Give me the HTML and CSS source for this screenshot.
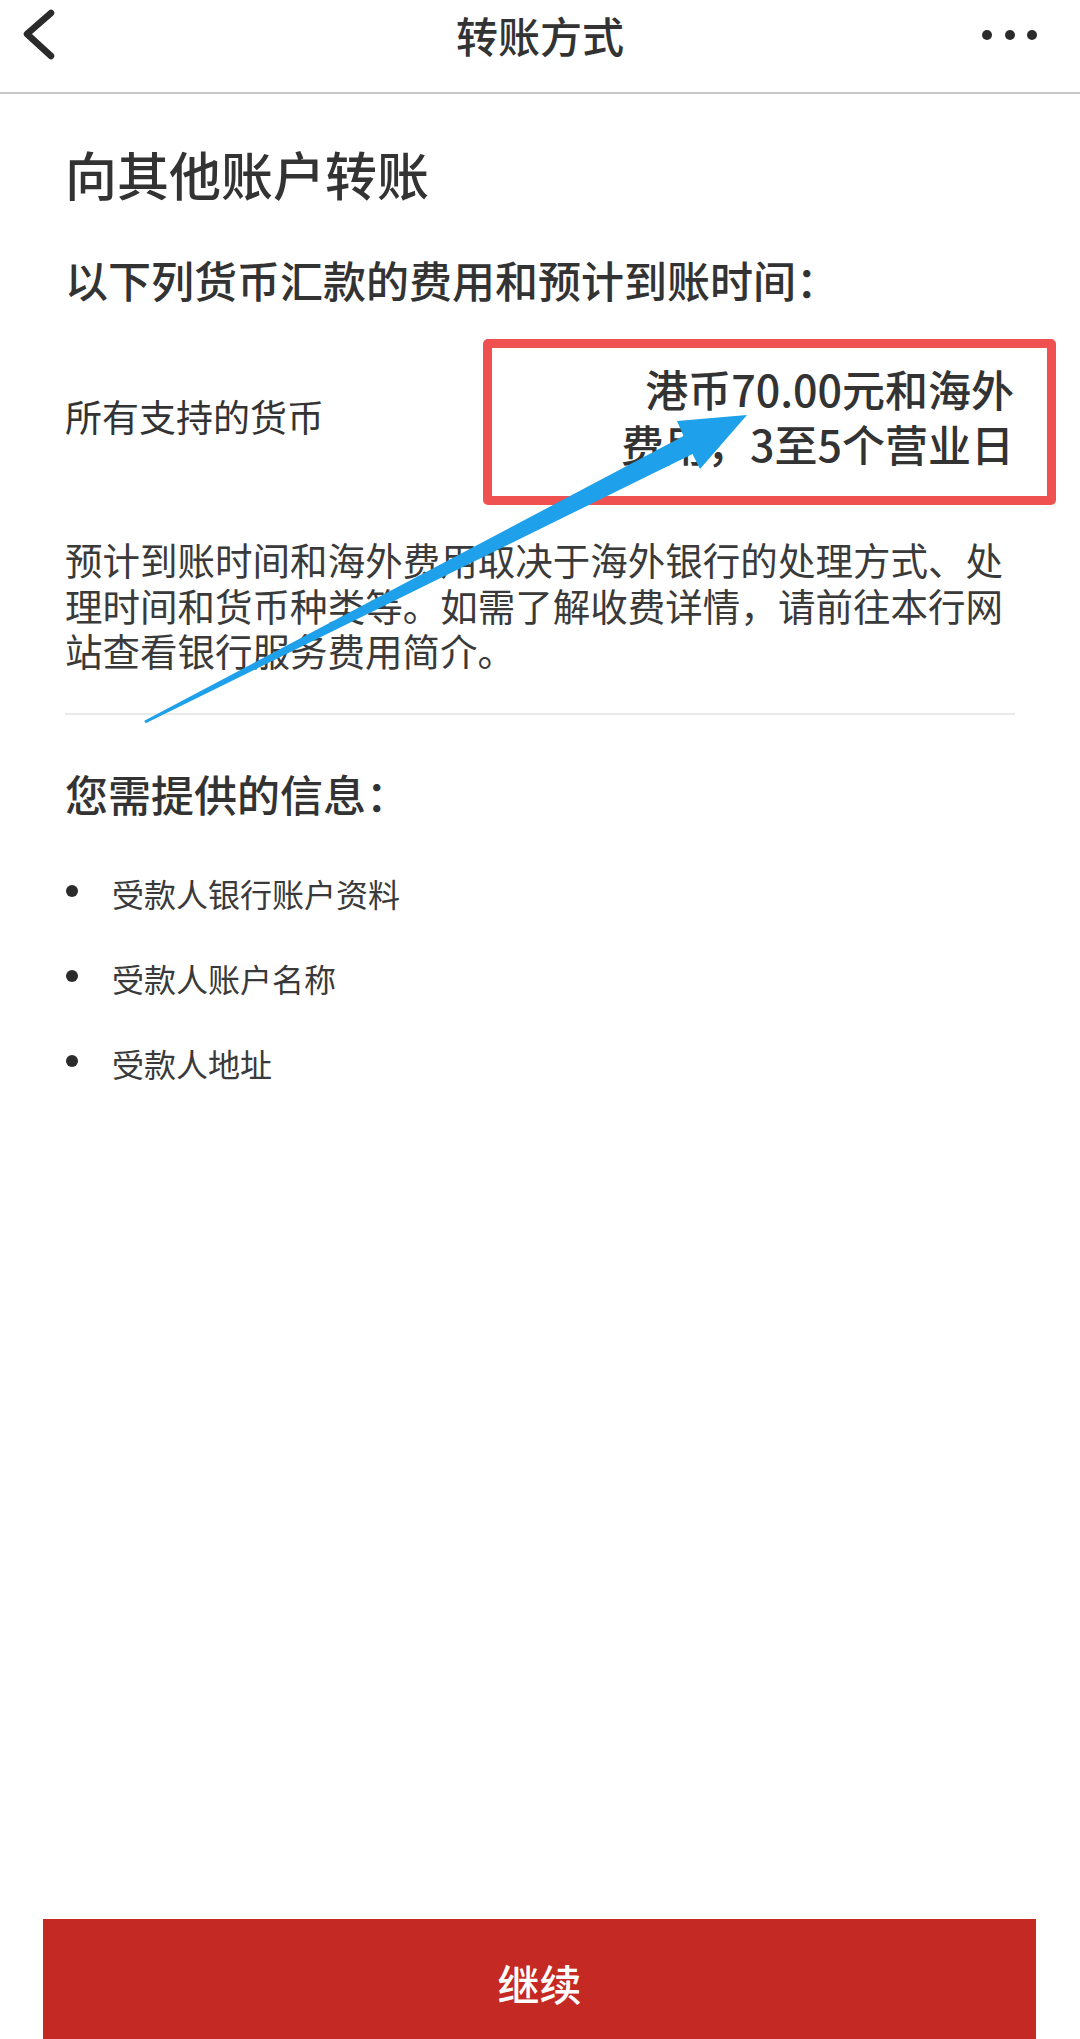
FILE: index.html
```html
<!DOCTYPE html>
<html lang="zh-CN">
<head>
<meta charset="utf-8">
<title>转账方式</title>
<link rel="stylesheet" href="styles.css">
</head>
<body>
<div class="page">
  <header class="topbar">
    <div class="back">
      <svg width="40" height="56" viewBox="0 0 40 56"><polyline points="28,6 4,27 28,49" fill="none" stroke="#2b2b2b" stroke-width="6.5" stroke-linecap="round" stroke-linejoin="round"/></svg>
    </div>
    <div class="title">转账方式</div>
    <div class="more"><span class="dot"></span><span class="dot"></span><span class="dot"></span></div>
  </header>

  <main class="content">
    <h1 class="h1">向其他账户转账</h1>
    <h2 class="h2">以下列货币汇款的费用和预计到账时间：</h2>

    <div class="fee-row">
      <div class="fee-label">所有支持的货币</div>
      <div class="fee-value">港币70.00元和海外<br>费用，3至5个营业日</div>
      <div class="mark-box"></div>
    </div>

    <p class="note">
      <span class="jline">预计到账时间和海外费用取决于海外银行的处理方式、处</span>
      <span class="jline">理时间和货币种类等。如需了解收费详情，请前往本行网</span>
      <span class="line">站查看银行服务费用简介。</span>
    </p>

    <div class="divider"></div>

    <h2 class="h2 info-title">您需提供的信息：</h2>
    <ul class="info-list">
      <li><span class="bullet"></span><span>受款人银行账户资料</span></li>
      <li><span class="bullet"></span><span>受款人账户名称</span></li>
      <li><span class="bullet"></span><span>受款人地址</span></li>
    </ul>
  </main>

  <footer class="footer">
    <button class="continue">继续</button>
  </footer>

  <svg class="arrow" width="1080" height="2039" viewBox="0 0 1080 2039">
    <path d="M144.3,720.7 L683.5,436.1 L677,421 L747,415 L700,469 L692.5,453.9 L145.7,723.3 Z" fill="#1ea1ea"/>
  </svg>
</div>
</body>
</html>
```

FILE: styles.css
```css
html, body {
  margin: 0;
  padding: 0;
  background: #ffffff;
}

body {
  font-family: "Noto Sans CJK SC", "Noto Sans", sans-serif;
  color: #333333;
  overflow: hidden;
}

.page {
  position: relative;
  min-height: 2039px;
  display: flex;
  flex-direction: column;
}

.topbar {
  height: 70px;
  padding-bottom: 22px;
  border-bottom: 2px solid #c8c8c8;
  display: grid;
  grid-template-columns: 200px 1fr 200px;
  align-items: center;
}

.back {
  padding-left: 23px;
  display: flex;
  align-items: center;
}

.title {
  text-align: center;
  font-size: 42px;
  font-weight: 500;
  color: #333333;
  line-height: 70px;
}

.more {
  display: flex;
  justify-content: flex-end;
  gap: 12.5px;
  padding-right: 43px;
}

.dot {
  width: 10px;
  height: 10px;
  border-radius: 50%;
  background: #2b2b2b;
}

.content {
  padding: 0 65px;
}

.h1 {
  margin: 50px 0 0;
  font-size: 52px;
  line-height: 60px;
  font-weight: 500;
  color: #333333;
}

.h2 {
  margin: 49px 0 0;
  font-size: 43px;
  line-height: 52px;
  font-weight: 500;
  color: #333333;
}

.fee-row {
  position: relative;
  margin-top: 56px;
  display: flex;
  justify-content: space-between;
  align-items: center;
}

.fee-label {
  font-size: 37px;
  line-height: 50px;
}

.fee-value {
  text-align: right;
  font-size: 43px;
  line-height: 55px;
  font-weight: 500;
  margin-right: 1px;
}

.mark-box {
  position: absolute;
  top: -22px;
  right: -41px;
  width: 573px;
  height: 166px;
  box-sizing: border-box;
  border: 9px solid #ef5151;
  border-radius: 5px;
}

.note {
  margin: 65px 0 0;
  width: 938px;
  font-size: 37.5px;
  line-height: 45.5px;
  color: #3a3a3a;
}

.jline {
  display: block;
  text-align: justify;
  text-align-last: justify;
}

.line {
  display: block;
}

.divider {
  margin-top: 40px;
  height: 2px;
  background: #e9e9e9;
}

.info-title {
  margin-top: 52px;
  font-weight: 500;
}

.info-list {
  list-style: none;
  margin: 32px 0 0;
  padding: 0;
}

.info-list li {
  display: flex;
  align-items: center;
  height: 85px;
  font-size: 32px;
  color: #3a3a3a;
}

.bullet {
  width: 12px;
  height: 12px;
  border-radius: 50%;
  background: #2b2b2b;
  margin-left: 1px;
  margin-right: 34px;
  position: relative;
  top: -2px;
}

.footer {
  margin-top: auto;
  padding: 0 44px 0 43px;
}

.continue {
  display: flex;
  align-items: center;
  justify-content: center;
  width: 100%;
  height: 120px;
  box-sizing: border-box;
  padding: 6px 0 0;
  border: none;
  border-radius: 0;
  background: #c52923;
  color: #ffffff;
  font-family: "Noto Sans CJK SC", "Noto Sans", sans-serif;
  font-size: 42px;
  font-weight: 500;
}

.arrow {
  position: absolute;
  left: 0;
  top: 0;
  pointer-events: none;
}
```
